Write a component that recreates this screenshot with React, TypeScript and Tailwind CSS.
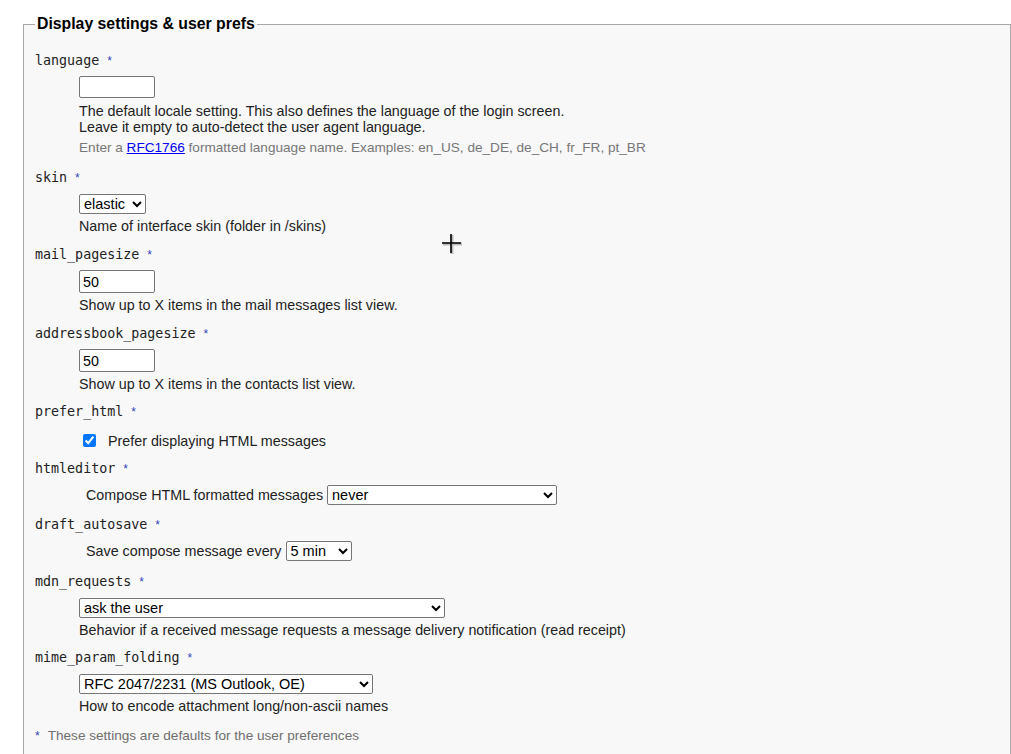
import React from "react";

const mono = "font-['DejaVu_Sans_Mono',monospace] text-[13.33px] leading-[20px] text-[#222]";
const sans = "font-['Liberation_Sans',Arial,sans-serif]";
const field =
  "block h-[22px] w-[76px] border border-[#767676] rounded-[2px] bg-white px-[3px] text-[14.3px] text-black";
const dropdown =
  "block h-[20px] border border-[#767676] rounded-[2px] bg-white pl-0 text-[14.5px] leading-[18px] text-black";

const Label = ({ name }: { name: string }) => (
  <div className={mono}>
    {name}
    <span className={`${sans} ml-[8px] text-[12px] text-[#3344bb]`}>*</span>
  </div>
);

const Desc = ({ children }: { children: React.ReactNode }) => (
  <div className="mt-[4px] text-[14.3px] leading-[16px] text-[#222]">{children}</div>
);

export default function App() {
  return (
    <div className={`${sans} relative h-[754px] w-full overflow-hidden bg-white`}>
      <fieldset className="ml-[23px] mt-[14px] border border-[#a8a8a8] bg-[#f8f8f8] pl-[11px] pr-[12px] pt-[17px] pb-[20px]">
        <legend className="px-[2px] text-[15.8px] font-bold leading-[20px] text-black">
          Display settings &amp; user prefs
        </legend>

        {/* language */}
        <Label name="language" />
        <div className="ml-[44px] mt-[5px]">
          <input type="text" className={field} defaultValue="" />
          <div className="mt-[5px] text-[14.3px] leading-[16px] text-[#222]">
            The default locale setting. This also defines the language of the login screen.
            <br />
            Leave it empty to auto-detect the user agent language.
          </div>
          <div className="mt-[5px] text-[13.6px] leading-[16px] text-[#777]">
            Enter a{" "}
            <a href="#" className="text-[#0000ee] underline">
              RFC1766
            </a>{" "}
            formatted language name. Examples: en_US, de_DE, de_CH, fr_FR, pt_BR
          </div>
        </div>

        {/* skin */}
        <div className="mt-[12px]">
          <Label name="skin" />
          <div className="ml-[44px] mt-[6px]">
            <select className={`${dropdown} w-[67px]`} defaultValue="elastic">
              <option value="elastic">elastic</option>
            </select>
            <Desc>Name of interface skin (folder in /skins)</Desc>
          </div>
        </div>

        {/* mail_pagesize */}
        <div className="mt-[11px]">
          <Label name="mail_pagesize" />
          <div className="ml-[44px] mt-[5px]">
            <input type="text" className={`${field} h-[23px]`} defaultValue="50" />
            <Desc>Show up to X items in the mail messages list view.</Desc>
          </div>
        </div>

        {/* addressbook_pagesize */}
        <div className="mt-[11px]">
          <Label name="addressbook_pagesize" />
          <div className="ml-[44px] mt-[5px]">
            <input type="text" className={`${field} h-[23px]`} defaultValue="50" />
            <Desc>Show up to X items in the contacts list view.</Desc>
          </div>
        </div>

        {/* prefer_html */}
        <div className="mt-[10px]">
          <Label name="prefer_html" />
          <div className="ml-[44px] mt-[6px] flex h-[24px] items-center">
            <input type="checkbox" defaultChecked className="ml-[4px] h-[13px] w-[13px]" />
            <span className="ml-[12px] mt-[2px] text-[14.3px] leading-[18px] text-[#222]">
              Prefer displaying HTML messages
            </span>
          </div>
        </div>

        {/* htmleditor */}
        <div className="mt-[7px]">
          <Label name="htmleditor" />
          <div className="ml-[51px] mt-[6px] flex items-center gap-[4px]">
            <span className="text-[14.3px] leading-[20px] text-[#222]">
              Compose HTML formatted messages
            </span>
            <select className={`${dropdown} w-[230px]`} defaultValue="never">
              <option value="never">never</option>
            </select>
          </div>
        </div>

        {/* draft_autosave */}
        <div className="mt-[10px]">
          <Label name="draft_autosave" />
          <div className="ml-[51px] mt-[6px] flex items-center gap-[4px]">
            <span className="text-[14.3px] leading-[20px] text-[#222]">
              Save compose message every
            </span>
            <select className={`${dropdown} w-[66px]`} defaultValue="5">
              <option value="5">5 min</option>
            </select>
          </div>
        </div>

        {/* mdn_requests */}
        <div className="mt-[11px]">
          <Label name="mdn_requests" />
          <div className="ml-[44px] mt-[6px]">
            <select className={`${dropdown} w-[366px]`} defaultValue="ask">
              <option value="ask">ask the user</option>
            </select>
            <Desc>
              Behavior if a received message requests a message delivery notification (read receipt)
            </Desc>
          </div>
        </div>

        {/* mime_param_folding */}
        <div className="mt-[10px]">
          <Label name="mime_param_folding" />
          <div className="ml-[44px] mt-[6px]">
            <select className={`${dropdown} w-[294px]`} defaultValue="rfc">
              <option value="rfc">RFC 2047/2231 (MS Outlook, OE)</option>
            </select>
            <Desc>How to encode attachment long/non-ascii names</Desc>
          </div>
        </div>

        <div className="mt-[14px] text-[13.6px] leading-[16px] text-[#6f6f6f]">
          <span className="text-[12px] text-[#3344bb]">*</span>
          <span className="ml-[8px]">These settings are defaults for the user preferences</span>
        </div>
      </fieldset>

      {/* mouse cursor over the page */}
      <svg
        className="pointer-events-none absolute left-[441px] top-[233px]"
        width="22"
        height="22"
        viewBox="0 0 22 22"
      >
        <path d="M10 1v19M1 10h19" stroke="#bbb" strokeWidth="3" transform="translate(1 1)" />
        <path d="M10 1v19M1 10h19" stroke="#000" strokeWidth="1.6" />
      </svg>
    </div>
  );
}
